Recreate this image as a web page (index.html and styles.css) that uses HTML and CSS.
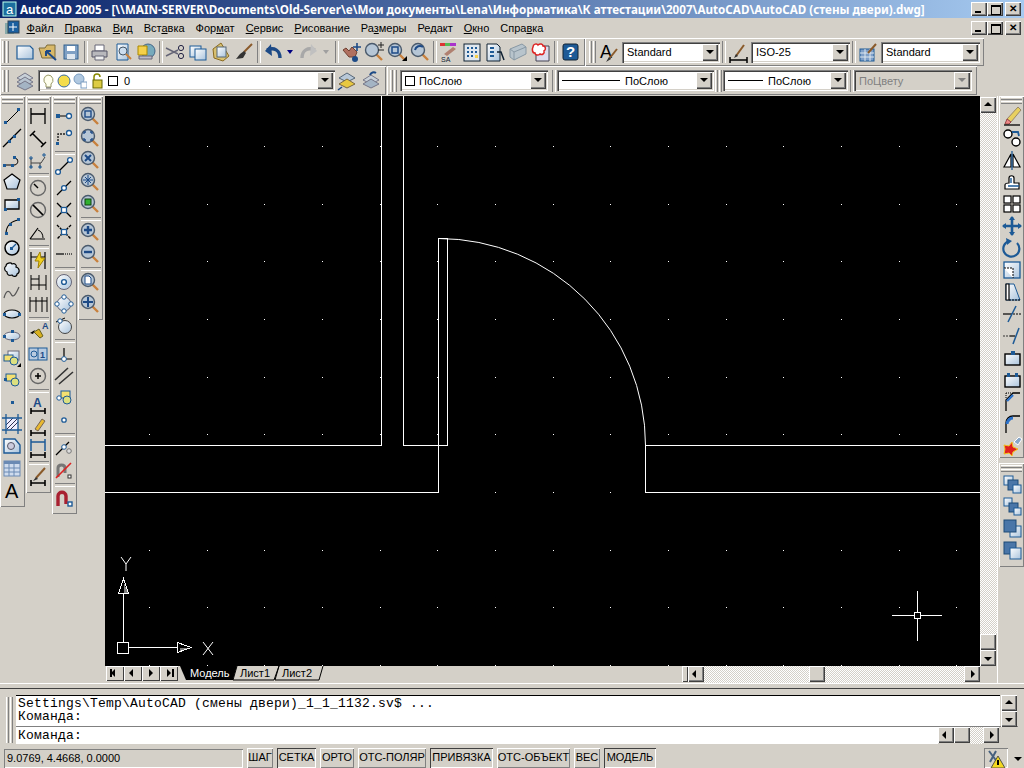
FILE: index.html
```html
<!DOCTYPE html>
<html>
  <head>
    <title>AutoCAD 2005</title>
    <meta charset="utf-8">
    <link rel="stylesheet" href="styles.css">
  </head>
  <body>
    <svg class="defs">
      <defs>
        <linearGradient id="pale" x1="0" y1="0" x2="1" y2="1"><stop offset="0" stop-color="#fff"/><stop offset="1" stop-color="#a9c3dc"/></linearGradient>
        <linearGradient id="blue" x1="0" y1="0" x2="1" y2="1"><stop offset="0" stop-color="#a7c0da"/><stop offset="1" stop-color="#1d5a96"/></linearGradient>
        <symbol id="mag" viewBox="0 0 22 22"><path d="M13 13l6 6" stroke="#c8803c" stroke-width="2.4"/><circle cx="9" cy="9" r="6.5" fill="#b6c6d6" stroke="#4a5a6c" stroke-width="1.4"/></symbol>
        <symbol id="ds" viewBox="0 0 22 22"><path d="M4 18h14M4 15v6M18 15v6M6 18l-2 0M16 18h2" stroke="#000" stroke-width="1.6" fill="none"/></symbol>
      </defs>
    </svg>

    <div class="titlebar">
      <svg class="appicon"><rect x="1" y="1" width="13" height="14" fill="#1c6e9e" stroke="#bfe"/><text x="4" y="13" class="appa">a</text></svg>
      <span class="titletext">AutoCAD 2005 - [\\MAIN-SERVER\Documents\Old-Server\e\Мои документы\Lena\Информатика\К аттестации\2007\AutoCAD\AutoCAD (стены двери).dwg]</span>
      <div class="wbtns"><span class="wb wmin"></span><span class="wb wmax"></span><span class="wb wclose">✕</span></div>
    </div>

    <div class="menubar">
      <svg class="docicon"><rect x="1" y="3" width="9" height="11" fill="#8aa"/><rect x="4" y="1" width="11" height="12" fill="#1a5fa0" stroke="#345"/><path d="M9 3v8M5 7h8" stroke="#fff"/></svg>
      <span class="mi"><u>Ф</u>айл</span>
      <span class="mi"><u>П</u>равка</span>
      <span class="mi"><u>В</u>ид</span>
      <span class="mi">Вст<u>а</u>вка</span>
      <span class="mi">Фор<u>м</u>ат</span>
      <span class="mi"><u>С</u>ервис</span>
      <span class="mi"><u>Р</u>исование</span>
      <span class="mi">Ра<u>з</u>меры</span>
      <span class="mi">Ре<u>д</u>акт</span>
      <span class="mi"><u>О</u>кно</span>
      <span class="mi">Спра<u>в</u>ка</span>
      <div class="wbtns"><span class="wb wmin"></span><span class="wb wmax"></span><span class="wb wclose">✕</span></div>
    </div>

    <div class="tbrow">
      <div class="tb tb-std">
        <span class="grip"></span>
        <span class="btn"><svg><path d="M3 5h13l3 3v10H3z" fill="url(#pale)" stroke="#1d5a96" stroke-width="1.2"/></svg></span>
        <span class="btn"><svg><path d="M2 7h6l2-3h8v13H5z" fill="#d8b868" stroke="#7a6a3a"/><path d="M19 19L9 10M9 10v5M9 10h5" stroke="#1d4a86" stroke-width="2"/></svg></span>
        <span class="btn"><svg><rect x="4" y="4" width="14" height="14" fill="#7fa0c4" stroke="#33608e"/><rect x="7" y="5" width="8" height="5" fill="#fff"/><rect x="7" y="13" width="8" height="5" fill="#dfe7ef"/></svg></span>
        <span class="sep"></span>
        <span class="btn"><svg><path d="M6 4h9v6H6z" fill="#fff" stroke="#667"/><path d="M3 10h15v6H3z" fill="#b8b8bc" stroke="#556"/><path d="M6 15h9v4H6z" fill="#eee" stroke="#667"/></svg></span>
        <span class="btn"><svg><path d="M5 3h11v16H5z" fill="url(#pale)" stroke="#1d5a96"/><circle cx="11" cy="10" r="4" fill="#cde" stroke="#456"/><path d="M14 13l5 5" stroke="#c8803c" stroke-width="2"/></svg></span>
        <span class="btn"><svg><circle cx="13" cy="10" r="7" fill="#7ab" stroke="#468"/><path d="M3 5h9v9H3z" fill="#f4d04a" stroke="#a80"/><path d="M4 15h13v3H4z" fill="#bbc" stroke="#667"/></svg></span>
        <span class="sep"></span>
        <span class="btn"><svg><path d="M2 7l12 6M2 15l12-6" stroke="#667" stroke-width="1.4"/><circle cx="17" cy="7" r="2.6" stroke="#224"/><circle cx="17" cy="15" r="2.6" stroke="#224"/></svg></span>
        <span class="btn"><svg><rect x="3" y="5" width="11" height="11" fill="url(#pale)" stroke="#1d5a96"/><rect x="8" y="8" width="11" height="11" fill="url(#pale)" stroke="#1d5a96"/></svg></span>
        <span class="btn"><svg><path d="M11 2l8 13-6 5-9-3-1-9z" fill="#d8c070" stroke="#8a6a20"/><rect x="7" y="6" width="9" height="10" fill="url(#pale)" stroke="#567"/></svg></span>
        <span class="btn"><svg><path d="M11 11L19 3" stroke="#8a5a2a" stroke-width="2"/><path d="M7 13l4-3 2 2-3 5-7 1z" fill="#333"/></svg></span>
        <span class="sep"></span>
        <span class="btn btn-w"><svg><path d="M18 17C18 9 12 6 5 9" stroke="#1d4a86" stroke-width="3.4"/><path d="M9 3L3 10l7 5z" fill="#1d4a86"/></svg></span>
        <span class="drop"></span>
        <span class="btn btn-w"><svg><path d="M4 17C4 9 10 6 17 9" stroke="#a8a8a8" stroke-width="3.4"/><path d="M13 3l6 7-7 5z" fill="#c0c0c0"/></svg></span>
        <span class="drop drop-off"></span>
        <span class="sep"></span>
        <span class="btn"><svg><path d="M3 9l6 7h6l2-5-5-5-3 4-3-3z" fill="#b07060" stroke="#704030"/><circle cx="15" cy="18" r="3" fill="#1d4a86"/><path d="M17 2v8M13 6h8" stroke="#1d4a86" stroke-width="1.6"/></svg></span>
        <span class="btn"><svg><use href="#mag" width="22" height="22"/><path d="M15 4h6M18 1v6M15 9h6" stroke="#222"/></svg></span>
        <span class="btn"><svg><use href="#mag" width="22" height="22"/><rect x="6" y="6" width="6" height="6" stroke="#1d4a86" stroke-width="1.5"/><path d="M16 20h5v-5z" fill="#000"/></svg></span>
        <span class="btn"><svg><use href="#mag" width="22" height="22"/><path d="M14 6a5 5 0 0 0-8 3" stroke="#1d4a86" stroke-width="2"/></svg></span>
        <span class="sep"></span>
        <span class="btn"><svg><path d="M2 2h5v3H2z" fill="#d33"/><path d="M7 2h5v3H7z" fill="#5b5"/><path d="M12 2h6v3h-6z" fill="#a3c"/><path d="M6 13l9-7 3 2-9 7z" fill="#b08070"/><text x="3" y="21" class="ict">SA</text></svg></span>
        <span class="btn"><svg><rect x="3" y="3" width="16" height="17" fill="#dfe7ef" stroke="#123"/><path d="M6 6h2v2H6zM10 6h2v2h-2zM14 6h2v2h-2zM6 10h2v2H6zM10 10h2v2h-2zM14 10h2v2h-2zM6 14h2v2H6zM10 14h2v2h-2z" fill="#1d5a96"/><rect x="14" y="14" width="3" height="3" fill="#f4d04a"/></svg></span>
        <span class="btn"><svg><path d="M3 3h10l3 3v14H3z" fill="url(#pale)" stroke="#123"/><path d="M6 7h4M6 11h4M6 15h4" stroke="#1d5a96" stroke-width="2"/><path d="M13 11h4l3 8" stroke="#123" stroke-width="1.5"/></svg></span>
        <span class="btn"><svg><path d="M3 8l12-5 4 3v7L7 19l-4-3z" fill="#b8c4cc" stroke="#8898a4"/><path d="M3 8l4 3v8M7 11l12-5" stroke="#8898a4"/></svg></span>
        <span class="btn"><svg><path d="M6 5h13v15H6z" fill="#dde" stroke="#445"/><path d="M3 6c0-3 4-4 5-2 2-2 5-1 5 1 3 0 3 4 1 5 1 3-2 4-4 3-2 2-5 1-5-1-3 0-3-4-2-6z" fill="#fff" stroke="#d22" stroke-width="1.5"/></svg></span>
        <span class="sep"></span>
        <span class="btn"><svg><rect x="4" y="3" width="15" height="16" rx="2" fill="#1d5a96" stroke="#123"/><text x="7" y="16" class="icq">?</text></svg></span>
      </div>
      <div class="tb tb-style">
        <span class="grip"></span>
        <span class="btn btn-s"><svg><text x="2" y="17" class="ica">A</text><path d="M11 18l8-10" stroke="#8a5a2a" stroke-width="2"/><path d="M8 21l3-5 2 2z" fill="#333"/></svg></span>
        <div class="combo c-98"><span class="cv">Standard</span><span class="cb"></span></div>
        <span class="sep"></span>
        <span class="btn btn-s"><svg><path d="M2 19h17M2 16v6M19 16v6" stroke="#000" stroke-width="1.5"/><path d="M8 15l8-11" stroke="#8a5a2a" stroke-width="2"/><path d="M6 17l2-4 2 2z" fill="#333"/></svg></span>
        <div class="combo c-99"><span class="cv">ISO-25</span><span class="cb"></span></div>
        <span class="sep"></span>
        <span class="btn btn-s"><svg><rect x="2" y="8" width="14" height="12" fill="#7f9fc8" stroke="#1d5a96"/><path d="M2 12h14M2 16h14M7 8v12M12 8v12" stroke="#dfe7ef"/><path d="M10 12l8-9" stroke="#8a5a2a" stroke-width="2"/></svg></span>
        <div class="combo c-99"><span class="cv">Standard</span><span class="cb"></span></div>
      </div>
    </div>

    <div class="tbrow tbrow2">
      <div class="tb tb-layers">
        <span class="grip"></span>
        <span class="btn btn-l"><svg><path d="M11 3l8 5-8 4-8-4z" fill="#c8d0d8" stroke="#778"/><path d="M11 7l8 5-8 4-8-4z" fill="#b8c4d0" stroke="#778"/><path d="M11 11l8 5-8 4-8-4z" fill="#a4b4c4" stroke="#778"/></svg></span>
        <div class="combo c-layer">
          <span class="cv cv-layer">
            <svg class="lst"><path d="M8 2a5 5 0 0 1 3 9v3H6v-3A5 5 0 0 1 8 2z" fill="#ffe" stroke="#996"/><path d="M6 15h5" stroke="#555"/></svg>
            <svg class="lst"><circle cx="8" cy="8" r="6" fill="#f4dc4a" stroke="#3a6ca0"/></svg>
            <svg class="lst"><circle cx="7" cy="6" r="5" fill="#b0c8e0" stroke="#7a9cc0"/><rect x="9" y="9" width="6" height="6" fill="#fff" stroke="#7a9cc0"/></svg>
            <svg class="lst"><path d="M6 7V4a3 3 0 0 1 6 0h0" stroke="#880" stroke-width="1.5" fill="none"/><rect x="5" y="7" width="9" height="8" fill="#dc4" stroke="#660"/></svg>
            <span class="sw"></span><span>0</span>
          </span>
          <span class="cb"></span>
        </div>
        <span class="btn btn-l"><svg><path d="M11 3l8 5-8 4-8-4z" fill="#b8c8d8" stroke="#567"/><path d="M11 9l8 5-8 4-8-4z" fill="#e8c840" stroke="#764"/><path d="M2 20l4-3" stroke="#1d4a86" stroke-width="1.5"/></svg></span>
        <span class="btn btn-l"><svg><path d="M11 5l8 5-8 4-8-4z" fill="#c8d0d8" stroke="#778"/><path d="M11 9l8 5-8 4-8-4z" fill="#a4b4c4" stroke="#778"/><path d="M16 3a4 4 0 0 0-6 2" stroke="#1d4a86" stroke-width="2"/></svg></span>
      </div>
      <div class="tb tb-props">
        <span class="grip"></span>
        <div class="combo c-148"><span class="cv"><span class="sw"></span>ПоСлою</span><span class="cb"></span></div>
        <span class="sep sep-w"></span>
        <div class="combo c-157"><span class="cv"><span class="ln ln-58"></span>ПоСлою</span><span class="cb"></span></div>
        <span class="grip grip-in"></span>
        <div class="combo c-125"><span class="cv"><span class="ln ln-35"></span>ПоСлою</span><span class="cb"></span></div>
        <span class="sep"></span>
        <div class="combo c-118 combo-off"><span class="cv">ПоЦвету</span><span class="cb"></span></div>
      </div>
    </div>

    <div class="main">
      <div class="dock">
        <div class="vtb vtb-1">
          <span class="hgrip"></span>
          <span class="vbtn"><svg><path d="M5 18L18 5" stroke="#000"/><path d="M3 16h3v3H3zM16 3h3v3h-3z" fill="#1d5a96"/></svg></span>
          <span class="vbtn"><svg><path d="M2 20L20 2" stroke="#000" stroke-width="1.3"/><path d="M7 13h3v3H7zM12 8h3v3h-3z" fill="#1d5a96"/></svg></span>
          <span class="vbtn"><svg><path d="M4 16h9c3 0 5-3 3-6l-3-1" stroke="#000"/><path d="M2 15h3v3H2zM10 15h3v3h-3zM12 7h3v3h-3z" fill="#1d5a96"/></svg></span>
          <span class="vbtn"><svg><path d="M11 3l8 6-3 9H6L3 9z" fill="url(#pale)" stroke="#000" stroke-width="1.2"/></svg></span>
          <span class="vbtn"><svg><path d="M4 7h14v9H4z" fill="url(#pale)" stroke="#000" stroke-width="1.3"/><path d="M3 15h3v3H3zM16 5h3v3h-3z" fill="#1d5a96"/></svg></span>
          <span class="vbtn"><svg><path d="M5 19C5 11 10 6 18 5" stroke="#000" stroke-width="1.2"/><path d="M4 17h3v3H4zM16 3h3v3h-3zM8 8h3v3H8z" fill="#1d5a96"/></svg></span>
          <span class="vbtn"><svg><circle cx="11" cy="11" r="7" fill="url(#pale)" stroke="#000" stroke-width="1.5"/><path d="M11 11l4-4" stroke="#1d5a96" stroke-width="1.2"/><rect x="9" y="10" width="3" height="3" fill="#1d5a96"/></svg></span>
          <span class="vbtn"><svg><path d="M5 7c0-3 5-4 6-2 3-1 5 1 4 3 4 1 4 6 1 7 0 3-4 3-5 1-3 1-5 0-5-3-3-1-3-5-1-6z" fill="url(#pale)" stroke="#000" stroke-width="1.2"/></svg></span>
          <span class="vbtn"><svg><path d="M3 17c2-8 5-8 7-4s4 2 8-7" stroke="#555" stroke-width="1.2"/></svg></span>
          <span class="vbtn"><svg><ellipse cx="11" cy="11" rx="8" ry="4" fill="url(#pale)" stroke="#000" stroke-width="1.2"/><path d="M2 10h3v3H2zM17 10h3v3h-3z" fill="#1d5a96"/></svg></span>
          <span class="vbtn"><svg><ellipse cx="11" cy="11" rx="8" ry="4" fill="url(#pale)" stroke="#667"/><path d="M2 10h3v3H2zM10 14h3v3h-3zM10 5h3v3h-3z" fill="#1d5a96"/></svg></span>
          <span class="vbtn"><svg><rect x="7" y="4" width="11" height="9" fill="url(#pale)" stroke="#667"/><rect x="3" y="8" width="9" height="6" fill="#f4e070" stroke="#1d5a96"/><circle cx="13" cy="14" r="4" fill="#dce080" stroke="#1d5a96"/><path d="M16 20h4v-4z" fill="#000"/></svg></span>
          <span class="vbtn"><svg><rect x="5" y="5" width="10" height="7" fill="#f4e070" stroke="#1d5a96"/><circle cx="14" cy="13" r="4" fill="#dce080" stroke="#1d5a96"/><rect x="3" y="9" width="3" height="3" fill="#1d5a96"/></svg></span>
          <span class="vbtn"><svg><rect x="10" y="10" width="3" height="3" fill="#1d5a96"/></svg></span>
          <span class="vbtn"><svg><rect x="5" y="5" width="12" height="12" fill="#eef"/><path d="M6 16L16 6M9 17l8-8M5 12l7-7" stroke="#335"/><path d="M1 5h20M1 17h20M5 1v20M17 1v20" stroke="#1d5a96" stroke-width="1.3"/></svg></span>
          <span class="vbtn"><svg><path d="M3 4h11l5 6v8H3z" fill="url(#pale)" stroke="#1d5a96" stroke-width="1.4"/><circle cx="10" cy="11" r="3.5" fill="#ccd" stroke="#556"/></svg></span>
          <span class="vbtn"><svg><rect x="3" y="4" width="16" height="15" fill="#cfdcee" stroke="#6a8ab4"/><path d="M3 4h16v3H3z" fill="#6a8ab4"/><path d="M3 11h16M3 15h16M8 7v12M13 7v12" stroke="#6a8ab4"/></svg></span>
          <span class="vbtn"><svg><text x="4" y="19" class="icbig">A</text></svg></span>
        </div>
        <div class="vtb vtb-2">
          <span class="hgrip"></span>
          <span class="vbtn"><svg><path d="M4 3v16M18 3v16" stroke="#000" stroke-width="1.3"/><path d="M4 9h14" stroke="#000" stroke-width="1.6"/></svg></span>
          <span class="vbtn"><svg><path d="M3 9l5-5M14 20l5-5M6 7l10 10" stroke="#000" stroke-width="1.5"/></svg></span>
          <span class="vbtn"><svg><path d="M4 19V9M4 14h10l4-6M13 14v5" stroke="#444"/><path d="M3 8h2v2H3zM3 17h2v2H3zM16 5h2v2h-2zM12 17h2v2h-2z" stroke="#1d5a96" fill="none"/></svg></span>
          <span class="vsep"></span>
          <span class="vbtn"><svg><circle cx="11" cy="11" r="7.5" stroke="#666" stroke-width="1.4"/><path d="M11 11L7 7" stroke="#000" stroke-width="1.5"/></svg></span>
          <span class="vbtn"><svg><circle cx="11" cy="11" r="7.5" stroke="#666" stroke-width="1.4"/><path d="M6 6l10 10" stroke="#000" stroke-width="1.7"/></svg></span>
          <span class="vbtn"><svg><path d="M3 18h15M3 18L11 7" stroke="#000" stroke-width="1.2"/><path d="M11 9c3 1 5 4 5 8" stroke="#000"/></svg></span>
          <span class="vsep"></span>
          <span class="vbtn"><svg><path d="M4 3v17M18 3v17M4 8h14" stroke="#000" stroke-width="1.2"/><path d="M13 3l-5 9h4l-1 7 7-10h-4z" fill="#f0d020" stroke="#a08000"/></svg></span>
          <span class="vbtn"><svg><path d="M4 4v15M12 4v15M19 4v15M4 8h8M4 14h15" stroke="#000"/></svg></span>
          <span class="vbtn"><svg><path d="M3 4v15M9 4v15M15 4v15M20 4v15M3 8h17" stroke="#000"/></svg></span>
          <span class="vsep"></span>
          <span class="vbtn"><svg><path d="M3 12l5-3-2 4z" fill="#000"/><path d="M7 11l6 6 3-2-4-7z" fill="#d8b020" stroke="#686020"/><text x="15" y="8" class="ict ict-b">A</text></svg></span>
          <span class="vbtn"><svg><rect x="2" y="5" width="18" height="12" fill="#b8cbe0" stroke="#1d5a96"/><path d="M11 5v12" stroke="#1d5a96"/><circle cx="7" cy="11" r="3" stroke="#1d5a96"/><text x="13" y="15" class="ict ict-b">1</text></svg></span>
          <span class="vbtn"><svg><circle cx="11" cy="11" r="7.5" stroke="#666" stroke-width="1.4"/><path d="M8 11h6M11 8v6" stroke="#000" stroke-width="1.5"/></svg></span>
          <span class="vsep"></span>
          <span class="vbtn"><svg><use href="#ds" width="22" height="22"/><text x="6" y="14" class="icb">A</text></svg></span>
          <span class="vbtn"><svg><use href="#ds" width="22" height="22"/><path d="M8 14l7-10 3 2-7 10z" fill="#e8b830" stroke="#765"/></svg></span>
          <span class="vbtn"><svg><use href="#ds" width="22" height="22"/><path d="M4 5h14M4 2v12M18 2v12" stroke="#1d5a96" stroke-width="1.5"/></svg></span>
          <span class="vsep"></span>
          <span class="vbtn"><svg><use href="#ds" width="22" height="22"/><path d="M9 13l9-10" stroke="#8a5a2a" stroke-width="2"/><path d="M6 16l3-4 2 2z" fill="#333"/></svg></span>
        </div>
        <div class="vtb vtb-3">
          <span class="hgrip"></span>
          <span class="vbtn"><svg><path d="M4 11h10" stroke="#000"/><rect x="3" y="9" width="4" height="4" fill="#1d5a96"/><circle cx="16" cy="11" r="2.5" fill="#fff" stroke="#1d5a96" stroke-width="1.3"/></svg></span>
          <span class="vbtn"><svg><path d="M5 17V7h9" stroke="#222" stroke-dasharray="2 1" stroke-width="1.4"/><rect x="3" y="15" width="3" height="3" fill="#1d5a96"/><circle cx="16" cy="6" r="2.5" fill="#fff" stroke="#1d5a96" stroke-width="1.3"/></svg></span>
          <span class="vsep"></span>
          <span class="vbtn"><svg><path d="M4 18L17 5" stroke="#000" stroke-width="1.3"/><circle cx="5" cy="17" r="2.4" fill="#fff" stroke="#1d5a96" stroke-width="1.3"/><circle cx="17" cy="5" r="2.4" fill="#fff" stroke="#1d5a96" stroke-width="1.3"/></svg></span>
          <span class="vbtn"><svg><path d="M4 18L18 4" stroke="#000" stroke-width="1.3"/><circle cx="11" cy="11" r="2.4" fill="#fff" stroke="#1d5a96" stroke-width="1.3"/></svg></span>
          <span class="vbtn"><svg><path d="M4 4l14 14M18 4L4 18" stroke="#000" stroke-width="1.4"/><rect x="8.5" y="8.5" width="5" height="5" fill="#fff" stroke="#1d5a96" stroke-width="1.3"/></svg></span>
          <span class="vbtn"><svg><path d="M4 4l14 14M18 4L4 18" stroke="#000" stroke-width="1.4" stroke-dasharray="3 1"/><rect x="8.5" y="8.5" width="5" height="5" fill="#fff" stroke="#1d5a96" stroke-width="1.3"/></svg></span>
          <span class="vbtn"><svg><path d="M3 11h8" stroke="#333" stroke-width="1.6"/><path d="M12 11h8" stroke="#333" stroke-width="1.4" stroke-dasharray="1 1"/></svg></span>
          <span class="vsep"></span>
          <span class="vbtn"><svg><circle cx="11" cy="11" r="7.5" fill="url(#pale)" stroke="#667"/><circle cx="11" cy="11" r="2.4" fill="#fff" stroke="#1d5a96" stroke-width="1.4"/></svg></span>
          <span class="vbtn"><svg><circle cx="11" cy="11" r="7" fill="url(#pale)" stroke="#667"/><circle cx="11" cy="4" r="2.2" fill="#fff" stroke="#1d5a96"/><circle cx="11" cy="18" r="2.2" fill="#fff" stroke="#1d5a96"/><circle cx="4" cy="11" r="2.2" fill="#fff" stroke="#1d5a96"/><circle cx="18" cy="11" r="2.2" fill="#fff" stroke="#1d5a96"/></svg></span>
          <span class="vbtn"><svg><circle cx="12" cy="12" r="6.5" fill="url(#pale)" stroke="#444"/><path d="M3 7l9-4" stroke="#000"/><circle cx="7" cy="6" r="2.2" fill="#fff" stroke="#1d5a96"/></svg></span>
          <span class="vsep"></span>
          <span class="vbtn"><svg><path d="M3 16h16M11 5v11" stroke="#000" stroke-width="1.2"/><circle cx="11" cy="16" r="2.4" fill="#fff" stroke="#1d5a96"/></svg></span>
          <span class="vbtn"><svg><path d="M2 15L15 3M6 19L20 7" stroke="#333" stroke-width="1.6"/></svg></span>
          <span class="vbtn"><svg><rect x="8" y="4" width="9" height="7" fill="#f4e070" stroke="#1d5a96"/><circle cx="14" cy="13" r="4" fill="#dce080" stroke="#1d5a96"/><circle cx="6" cy="11" r="2.2" fill="#fff" stroke="#1d5a96"/></svg></span>
          <span class="vbtn"><svg><circle cx="11" cy="11" r="2.2" fill="#fff" stroke="#1d5a96" stroke-width="1.3"/></svg></span>
          <span class="vsep"></span>
          <span class="vbtn"><svg><path d="M3 18L16 5" stroke="#000" stroke-width="1.3"/><circle cx="11" cy="10" r="2.3" fill="#fff" stroke="#1d5a96"/><circle cx="16" cy="14" r="2.3" fill="#ddd" stroke="#777"/></svg></span>
          <span class="vbtn"><svg><path d="M5 18V9c0-4 7-4 7 0v5" stroke="#777" stroke-width="3"/><path d="M3 19L18 4" stroke="#d22" stroke-width="1.6"/><rect x="15" y="16" width="3" height="3" fill="#fff" stroke="#333"/></svg></span>
          <span class="vsep"></span>
          <span class="vbtn"><svg><path d="M5 19V9c0-5 8-5 8 0v8" stroke="#a82030" stroke-width="3.4"/><rect x="15" y="15" width="4" height="4" fill="#fff" stroke="#1d5a96" stroke-width="1.4"/></svg></span>
        </div>
        <div class="vtb vtb-4">
          <span class="hgrip"></span>
          <span class="vbtn"><svg><use href="#mag" width="22" height="22"/><rect x="6" y="6" width="6" height="6" stroke="#1d4a86" stroke-width="1.4"/></svg></span>
          <span class="vbtn"><svg><use href="#mag" width="22" height="22"/><path d="M5 7V5h2M11 5h2v2M13 11v2h-2M7 13H5v-2" stroke="#1d4a86" stroke-width="1.3"/></svg></span>
          <span class="vbtn"><svg><use href="#mag" width="22" height="22"/><path d="M6 6l6 6M12 6l-6 6" stroke="#1d4a86" stroke-width="2"/></svg></span>
          <span class="vbtn"><svg><use href="#mag" width="22" height="22"/><path d="M6 6l6 6M12 6l-6 6M9 4v10M4 9h10" stroke="#1d4a86"/></svg></span>
          <span class="vbtn"><svg><use href="#mag" width="22" height="22"/><rect x="6" y="6" width="6" height="6" fill="#30b030" stroke="#104010"/></svg></span>
          <span class="vsep"></span>
          <span class="vbtn"><svg><use href="#mag" width="22" height="22"/><path d="M5 9h8M9 5v8" stroke="#1d4a86" stroke-width="2.4"/></svg></span>
          <span class="vbtn"><svg><use href="#mag" width="22" height="22"/><path d="M5 9h8" stroke="#1d4a86" stroke-width="2.4"/></svg></span>
          <span class="vsep"></span>
          <span class="vbtn"><svg><use href="#mag" width="22" height="22"/><path d="M6 5h4l2 2v6H6z" fill="#fff" stroke="#1d4a86"/></svg></span>
          <span class="vbtn"><svg><use href="#mag" width="22" height="22"/><path d="M9 4v10M4 9h10" stroke="#1d4a86" stroke-width="2"/></svg></span>
        </div>
      </div>

      <div class="center">
        <div class="viewrow">
          <svg class="drawing" viewBox="105 96 875 570">
            <g class="grid">
              <path d="M149 146.5H980M149 204.5H980M149 261.5H980M149 319.5H980M149 377.5H980M149 434.5H980M149 492.5H980M149 550.5H980M149 607.5H980M149 665.5H980"/>
            </g>
            <g class="lines">
              <path d="M381.5 96V445.5H105M403.5 96V445.5H447.5V238.5H438.5V492.5H105M980 445.5H645.5V492.5H980"/>
              <path class="arc" d="M438.5 238.5A207 207 0 0 1 645.5 445.5"/>
              <path d="M892 615.5H942M917.5 591V641"/>
              <rect x="914.5" y="612.5" width="6" height="6" fill="#000"/>
              <path d="M123.5 642V593M129 647.5H177"/>
              <path d="M118.5 593.5H128.5L123.5 579Z"/>
              <path d="M177.5 642.5V652.5L191 647.5Z"/>
              <path class="ucsfill" d="M123.5 582V593H128ZM180 647.5H190L180 651Z"/>
              <rect x="117.5" y="642.5" width="11" height="11"/>
              <path class="arc" d="M121 557l5 7 5-7M126 564v7M203 642l10 13M213 642l-10 13"/>
            </g>
          </svg>
          <div class="vscroll">
            <span class="sb up"></span>
            <span class="track"></span>
            <span class="sb"></span>
            <span class="sb dn"></span>
          </div>
        </div>
        <div class="tabrow">
          <div class="nav"><span class="nb nb-first"></span><span class="nb nb-prev"></span><span class="nb nb-next"></span><span class="nb nb-last"></span></div>
          <svg class="tabs">
            <path d="M3 0L9 14H56L60 0z" fill="#000"/>
            <path d="M60 0L56 14H97L102 0M102 0L98 14H142L146 0" stroke="#000" fill="#d4d0c8"/>
            <text x="13" y="11" class="tabt tabt-on">Модель</text>
            <text x="63" y="11" class="tabt">Лист1</text>
            <text x="105" y="11" class="tabt">Лист2</text>
          </svg>
          <span class="fill"></span>
          <span class="hhandle"></span>
          <span class="sb lt"></span>
          <span class="track track-h"></span>
          <span class="sb"></span>
          <span class="track track-r"></span>
          <span class="sb rt"></span>
        </div>
      </div>

      <div class="rdock">
        <div class="vtb vtb-r">
          <span class="hgrip"></span>
          <span class="vbtn"><svg><path d="M6 14L17 2l3 3-10 12z" fill="#e8d060" stroke="#986"/><path d="M6 14l4 3-2 2H4z" fill="#e88" stroke="#944"/><path d="M3 20h16" stroke="#000" stroke-width="1.3"/></svg></span>
          <span class="vbtn"><svg><circle cx="7" cy="7" r="4" fill="#fff" stroke="#000" stroke-width="1.4"/><circle cx="15" cy="15" r="4" fill="#fff" stroke="#000" stroke-width="1.4"/><path d="M11 5h6l1 4" stroke="#1d5a96" stroke-width="1.8"/></svg></span>
          <span class="vbtn"><svg><path d="M10 5L3 18h7zM12 5l7 13h-7z" stroke="#000" stroke-width="1.2" fill="#fff"/><path d="M11 2v19" stroke="#1d5a96" stroke-width="1.3"/></svg></span>
          <span class="vbtn"><svg><path d="M4 18v-4c0-2 3-2 4-2V7c0-3 5-3 5 0v5h5v6z" fill="#fff" stroke="#000" stroke-width="1.2"/><path d="M7 15h11M10 12V7" stroke="#1d5a96" stroke-width="1.4"/></svg></span>
          <span class="vbtn"><svg><rect x="3" y="3" width="7" height="7" fill="#fff" stroke="#000" stroke-width="1.2"/><rect x="12" y="3" width="7" height="7" fill="#fff" stroke="#000" stroke-width="1.2"/><rect x="3" y="12" width="7" height="7" fill="#fff" stroke="#000" stroke-width="1.2"/><rect x="12" y="12" width="7" height="7" fill="#fff" stroke="#000" stroke-width="1.2"/></svg></span>
          <span class="vbtn"><svg><path d="M11 2v18M2 11h18" stroke="#1d5a96" stroke-width="2.6"/><path d="M11 1l-3 4h6zM11 21l-3-4h6zM1 11l4-3v6zM21 11l-4-3v6z" fill="#1d5a96"/></svg></span>
          <span class="vbtn"><svg><path d="M8 4a8 8 0 1 0 8 2" stroke="#1d5a96" stroke-width="2.2"/><path d="M5 1l6 3-5 4z" fill="#1d5a96"/></svg></span>
          <span class="vbtn"><svg><rect x="3" y="3" width="16" height="16" fill="url(#pale)" stroke="#1d5a96" stroke-width="1.3"/><path d="M3 9h9v10" stroke="#000" stroke-dasharray="2 1" fill="#fff"/></svg></span>
          <span class="vbtn"><svg><path d="M5 3h8l6 16H5z" fill="url(#pale)" stroke="#1d5a96"/><path d="M5 3h3v16H5z" fill="#fff" stroke="#000" stroke-width="1.2"/><path d="M8 19h11" stroke="#000" stroke-dasharray="2 1"/></svg></span>
          <span class="vbtn"><svg><path d="M2 11h9" stroke="#000" stroke-width="1.2"/><path d="M12 11h8" stroke="#000" stroke-dasharray="2 1"/><path d="M7 19l8-16" stroke="#1d5a96" stroke-width="1.5"/></svg></span>
          <span class="vbtn"><svg><path d="M2 11h7" stroke="#333" stroke-dasharray="2 1"/><path d="M9 11h5" stroke="#000" stroke-width="1.2"/><path d="M12 19l6-16" stroke="#1d5a96" stroke-width="1.5"/></svg></span>
          <span class="vbtn"><svg><rect x="4" y="7" width="15" height="11" fill="url(#pale)" stroke="#000" stroke-width="1.4"/><rect x="10" y="4" width="4" height="4" fill="#1d5a96"/></svg></span>
          <span class="vbtn"><svg><rect x="4" y="7" width="15" height="11" fill="url(#pale)" stroke="#000" stroke-width="1.4"/><rect x="6" y="4" width="3" height="4" fill="#1d5a96"/><rect x="14" y="4" width="3" height="4" fill="#1d5a96"/></svg></span>
          <span class="vbtn"><svg><path d="M5 20V9l7-7h7" stroke="#000" stroke-width="1.3"/><path d="M6 10l6-6" stroke="#2a70c8" stroke-width="2.4"/><path d="M5 2h5M5 2v6" stroke="#000" stroke-dasharray="1 1"/></svg></span>
          <span class="vbtn"><svg><path d="M5 20V10c0-4 3-7 7-7h7" stroke="#000" stroke-width="1.3"/><path d="M6 11c0-3 3-6 6-6" stroke="#2a70c8" stroke-width="3"/></svg></span>
          <span class="vbtn"><svg><path d="M3 10l5 1 3-4 1 5 5 2-5 3-1 4-3-3-5 1 1-5z" fill="#e02020" stroke="#f0c020"/><path d="M13 7l5-5 3 2-4 6z" fill="#8aa8c8" stroke="#fff"/></svg></span>
        </div>
        <div class="vtb vtb-o">
          <span class="hgrip hgrip-2"></span>
          <span class="vbtn"><svg><rect x="3" y="3" width="9" height="9" fill="url(#pale)" stroke="#1d5a96"/><rect x="7" y="7" width="10" height="10" fill="#4a76a8" stroke="#1d4a76"/><rect x="12" y="12" width="8" height="8" fill="url(#pale)" stroke="#1d5a96"/></svg></span>
          <span class="vbtn"><svg><rect x="3" y="3" width="8" height="8" fill="url(#pale)" stroke="#1d5a96"/><rect x="8" y="8" width="9" height="9" fill="#4a76a8" stroke="#1d4a76"/><rect x="13" y="13" width="7" height="7" fill="url(#pale)" stroke="#1d5a96"/></svg></span>
          <span class="vbtn"><svg><rect x="9" y="9" width="11" height="11" fill="url(#pale)" stroke="#1d5a96"/><rect x="3" y="3" width="12" height="12" fill="#4a76a8" stroke="#1d4a76"/></svg></span>
          <span class="vbtn"><svg><rect x="3" y="3" width="12" height="12" fill="#4a76a8" stroke="#1d4a76"/><rect x="9" y="9" width="11" height="11" fill="url(#pale)" stroke="#1d5a96"/></svg></span>
        </div>
      </div>
    </div>

    <div class="divider"></div>

    <div class="cmd">
      <span class="grip grip-cmd"></span>
      <div class="cmdbody">
        <div class="cmdlog">
          <div class="cmdtext">
            <div>Settings\Temp\AutoCAD (смены двери)_1_1_1132.sv$ ...</div>
            <div>Команда:</div>
          </div>
          <div class="cmdscroll"><span class="sb up"></span><span class="sb dn"></span></div>
        </div>
        <div class="cmdinput">
          <span class="cmdline">Команда:</span>
          <div class="cmdh"><span class="sb lt"></span><span class="sb"></span><span class="track"></span><span class="sb rt"></span></div>
        </div>
      </div>
    </div>

    <div class="status">
      <span class="coords">9.0769, 4.4668, 0.0000</span>
      <span class="st st-1">ШАГ</span>
      <span class="st st-2 on">СЕТКА</span>
      <span class="st st-3">ОРТО</span>
      <span class="st st-4">ОТС-ПОЛЯР</span>
      <span class="st st-5 on">ПРИВЯЗКА</span>
      <span class="st st-6">ОТС-ОБЪЕКТ</span>
      <span class="st st-7">ВЕС</span>
      <span class="st st-8 on">МОДЕЛЬ</span>
      <span class="fill"></span>
      <span class="tray"><svg><path d="M5 3l9 12M12 3L6 14" stroke="#46607e" stroke-width="2"/><path d="M14 8l7 12H7z" fill="#f4d820" stroke="#554"/><path d="M14 12v5" stroke="#000" stroke-width="2"/></svg></span>
      <span class="traydrop"></span>
    </div>
  </body>
</html>
```

FILE: styles.css
```css
* { box-sizing: border-box; }
html, body { margin: 0; height: 100%; }
body { width: 1024px; height: 768px; overflow: hidden; display: flex; flex-direction: column; background-color: #d4d0c8; font: 11px "Liberation Sans", Arial, sans-serif; color: #000; }
svg { display: block; fill: none; }
.defs { position: absolute; width: 0; height: 0; }

.titlebar { height: 18px; flex: none; display: flex; align-items: center; background: linear-gradient(to right, #0a246a, #a6caf0); color: #fff; padding-left: 2px; }
.appicon { width: 16px; height: 16px; margin-right: 2px; }
.appa { font: 13px "Liberation Sans", sans-serif; fill: #fff; }
.titletext { font: bold 11.65px "Noto Sans", sans-serif; white-space: nowrap; }
.wbtns { margin-left: auto; display: flex; padding-right: 3px; }
.wb { width: 16px; height: 14px; background: #d4d0c8; box-shadow: inset 1px 1px #fff, inset -1px -1px #404040, inset -2px -2px #808080; position: relative; font-size: 10px; line-height: 14px; text-align: center; color: #000; }
.wclose { margin-left: 2px; font-weight: bold; }
.wmin::after { content: ""; position: absolute; left: 4px; bottom: 3px; width: 6px; height: 2px; background: #000; }
.wmax::after { content: ""; position: absolute; left: 4px; top: 3px; width: 8px; height: 7px; border: 1px solid #000; border-top-width: 2px; }

.menubar { height: 20px; flex: none; display: flex; align-items: center; padding-left: 4px; }
.docicon { width: 16px; height: 16px; margin-right: 1px; }
.mi { padding: 0 5.5px; white-space: nowrap; }

.tbrow { height: 28px; flex: none; display: flex; }
.tbrow2 { height: 29px; }
.tb { display: flex; align-items: center; background: #d4d0c8; box-shadow: inset 1px 1px #fff, inset -1px -1px #808080; padding-left: 2px; }
.tb-std { width: 585px; }
.tb-style { width: 399px; padding-left: 4px; }
.tb-layers { width: 386px; }
.tb-props { width: 590px; margin-left: 1px; padding-left: 3px; }
.grip { width: 7px; height: 22px; flex: none; background: repeating-linear-gradient(to right, #fff 0 1px, #d4d0c8 1px 2px, #808080 2px 3px, #d4d0c8 3px 4px); }
.tb-props > .grip:first-child { margin-right: 3px; }
.grip-in { margin: 0 1px; width: 7px; }
.btn { width: 23px; height: 22px; flex: none; display: flex; justify-content: center; }
.btn svg { width: 22px; height: 22px; }
.btn-w { width: 24px; }
.btn-s { width: 25px; }
.tb-style .grip + .btn { width: 26px; }
.btn-l { width: 24px; }
.tb-std .grip + .btn { margin-left: 4px; }
.tb-layers .grip + .btn { margin-left: 4px; }
.sep { width: 6px; height: 22px; flex: none; position: relative; }
.sep::after { content: ""; position: absolute; left: 2px; top: 0; bottom: 0; width: 2px; border-left: 1px solid #808080; border-right: 1px solid #fff; }
.sep-w { width: 9px; }
.sep-w::after { left: 4px; }
.drop { width: 12px; height: 22px; flex: none; position: relative; }
.drop::after { content: ""; position: absolute; left: 2px; top: 9px; border: 3px solid transparent; border-top: 4px solid #000080; }
.drop-off::after { border-top-color: #a0a0a0; }

.combo { height: 21px; display: flex; flex: none; background: #fff; box-shadow: inset 1px 1px #808080, inset 2px 2px #404040, inset -1px -1px #fff, inset -2px -2px #d4d0c8; padding: 2px; }
.c-98 { width: 98px; }
.c-99 { width: 99px; }
.c-layer { width: 297px; margin-left: 1px; }
.c-148 { width: 148px; }
.c-157 { width: 157px; }
.c-125 { width: 125px; }
.c-118 { width: 118px; }
.cv { flex: 1; display: flex; align-items: center; padding-left: 3px; white-space: nowrap; overflow: hidden; font-size: 11px; }
.cb { width: 16px; flex: none; background: #d4d0c8; box-shadow: inset 1px 1px #fff, inset -1px -1px #404040, inset -2px -2px #808080; position: relative; }
.cb::after { content: ""; position: absolute; left: 4px; top: 6px; border: 4px solid transparent; border-top: 4px solid #000; }
.combo-off { background: #d4d0c8; color: #808080; }
.combo-off .cb::after { border-top-color: #808080; }
.sw { width: 10px; height: 10px; border: 1px solid #000; background: #fff; margin-right: 4px; flex: none; }
.ln { height: 1px; background: #000; flex: none; margin-right: 5px; }
.ln-58 { width: 58px; }
.ln-35 { width: 35px; }
.cv-layer { gap: 1px; padding-left: 0; }
.lst { width: 15px; height: 16px; flex: none; }
.cv-layer .sw { margin-right: 5px; margin-left: 4px; }

.main { height: 587px; flex: none; display: flex; margin-top: 1px; }
.dock { width: 105px; flex: none; display: flex; align-items: flex-start; gap: 1px; }
.vtb { width: 25px; flex: none; display: flex; flex-direction: column; align-items: center; box-shadow: inset 1px 1px #fff, inset -1px -1px #808080; }
.vtb-1 { height: 411px; }
.vtb-2 { height: 397px; }
.vtb-3 { height: 418px; }
.vtb-4 { height: 224px; }
.hgrip { width: 21px; height: 8px; flex: none; margin-top: 1px; background: repeating-linear-gradient(#fff 0 1px, #d4d0c8 1px 2px, #808080 2px 3px, #d4d0c8 3px 4px); }
.hgrip-2 { margin-top: 2px; }
.vbtn { width: 22px; height: 22px; flex: none; margin-left: -2px; }
.vbtn svg { width: 22px; height: 22px; }
.rdock .vbtn { margin-left: 0; }
.vsep { height: 6px; width: 20px; flex: none; padding-top: 2px; position: relative; }
.vsep::after { content: ""; position: absolute; left: 0; right: 0; top: 2px; height: 2px; border-top: 1px solid #808080; border-bottom: 1px solid #fff; }

.center { width: 892px; flex: none; display: flex; flex-direction: column; }
.viewrow { height: 570px; flex: none; display: flex; }
.drawing { width: 875px; height: 570px; background: #000; flex: none; }
.grid path { stroke: #fff; stroke-width: 1; stroke-dasharray: 1 56.67; shape-rendering: crispEdges; }
.lines path, .lines rect { stroke: #fff; stroke-width: 1; shape-rendering: crispEdges; }
.lines .arc { shape-rendering: auto; }
.lines .ucsfill { fill: #808080; stroke: none; }
.vscroll { width: 17px; display: flex; flex-direction: column; padding-top: 1px; }
.sb { width: 16px; height: 16px; flex: none; background: #d4d0c8; box-shadow: inset 1px 1px #fff, inset -1px -1px #404040, inset -2px -2px #808080; position: relative; display: block; }
.sb::after { content: ""; position: absolute; left: 4px; top: 4px; border: 4px solid transparent; }
.sb.up::after { border-bottom-color: #000; top: 1px; }
.sb.dn::after { border-top-color: #000; top: 7px; }
.sb.lt::after { border-right-color: #000; left: 0; }
.sb.rt::after { border-left-color: #000; left: 7px; }
.track { flex: 1; background: repeating-conic-gradient(#fff 0 25%, #d4d0c8 0 50%) 0 0 / 2px 2px; }
.tabrow { height: 17px; flex: none; display: flex; padding-right: 17px; }
.nav { display: flex; margin-left: 1px; flex: none; }
.nb { width: 18px; height: 15px; box-shadow: inset 1px 1px #fff, inset -1px -1px #404040; position: relative; }
.nb::after { content: ""; position: absolute; top: 3px; border: 4px solid transparent; }
.nb-first::after, .nb-prev::after { border-right-color: #000; left: 1px; }
.nb-next::after, .nb-last::after { border-left-color: #000; left: 7px; }
.nb-first::before, .nb-last::before { content: ""; position: absolute; top: 3px; bottom: 4px; width: 2px; background: #000; }
.nb-first::before { left: 4px; }
.nb-last::before { right: 4px; }
.tabs { width: 150px; height: 17px; flex: none; margin-left: -1px; }
.tabt { font: 11px "Liberation Sans", sans-serif; fill: #000; }
.tabt-on { fill: #fff; }
.fill { flex: 1; }
.hhandle { width: 6px; flex: none; height: 16px; box-shadow: inset 1px 1px #fff, inset -1px -1px #404040; }
.track-h { flex: 0 0 105px; }
.track-r { flex: 0 0 139px; }

.rdock { width: 27px; flex: none; display: flex; flex-direction: column; gap: 5px; border-left: 1px solid #fff; }
.vtb-r { height: 362px; width: 25px; margin-left: 1px; }
.vtb-o { height: 104px; width: 25px; margin-left: 1px; }

.divider { height: 6px; border-top: 1px solid #fff; border-bottom: 1px solid #404040; flex: none; }
.cmd { height: 56px; flex: none; display: flex; padding: 6px 6px 0 6px; gap: 3px; }
.grip-cmd { height: 46px; margin-top: 2px; }
.cmdbody { flex: 1; display: flex; flex-direction: column; }
.cmdlog { height: 32px; flex: none; display: flex; background: #fff; border-top: 1px solid #000; border-bottom: 1px solid #808080; }
.cmdtext { flex: 1; padding: 1px 0 0 2px; font: 13px/13px "Liberation Mono", monospace; letter-spacing: .2px; }
.cmdscroll { width: 18px; background: #d4d0c8; padding: 0 1px; margin-top: -1px; }
.cmdinput { height: 17px; flex: none; display: flex; background: #fff; font: 13px/17px "Liberation Mono", monospace; letter-spacing: .2px; }
.cmdline { flex: 1; padding-left: 2px; }
.cmdh { width: 80px; display: flex; background: #d4d0c8; padding-right: 19px; }

.status { height: 20px; flex: none; display: flex; align-items: center; padding: 0 0 0 4px; margin-top: 3px; gap: 4px; font-size: 11px; }
.coords { width: 239px; height: 19px; line-height: 18px; padding-left: 3px; box-shadow: inset 1px 1px #808080, inset -1px -1px #fff; }
.st { height: 20px; line-height: 19px; text-align: center; white-space: nowrap; box-shadow: inset 1px 1px #fff, inset -1px -1px #808080; flex: none; }
.st.on { box-shadow: inset 1px 1px #404040, inset -1px -1px #fff; }
.st-1 { width: 26px; }
.st-2 { width: 39px; }
.st-3 { width: 34px; }
.st-4 { width: 68px; }
.st-5 { width: 63px; }
.st-6 { width: 73px; }
.st-7 { width: 26px; }
.st-8 { width: 52px; }
.tray { width: 24px; height: 20px; box-shadow: inset 1px 1px #808080, inset -1px -1px #fff; flex: none; }
.tray svg { width: 24px; height: 20px; }
.traydrop { width: 12px; height: 20px; flex: none; position: relative; }
.traydrop::after { content: ""; position: absolute; left: 2px; top: 9px; border: 4px solid transparent; border-top: 4px solid #000; }

.ict { font: 7px "Liberation Sans", sans-serif; fill: #123; }
.ict-b { font-size: 9px; font-weight: bold; fill: #1d4a86; }
.icq { font: bold 15px "Liberation Sans", sans-serif; fill: #fff; }
.ica { font: 18px "Liberation Sans", sans-serif; fill: #000; }
.icb { font: bold 12px "Liberation Sans", sans-serif; fill: #1d4a86; }
.icbig { font: 20px "Liberation Sans", sans-serif; fill: #000; }
```
